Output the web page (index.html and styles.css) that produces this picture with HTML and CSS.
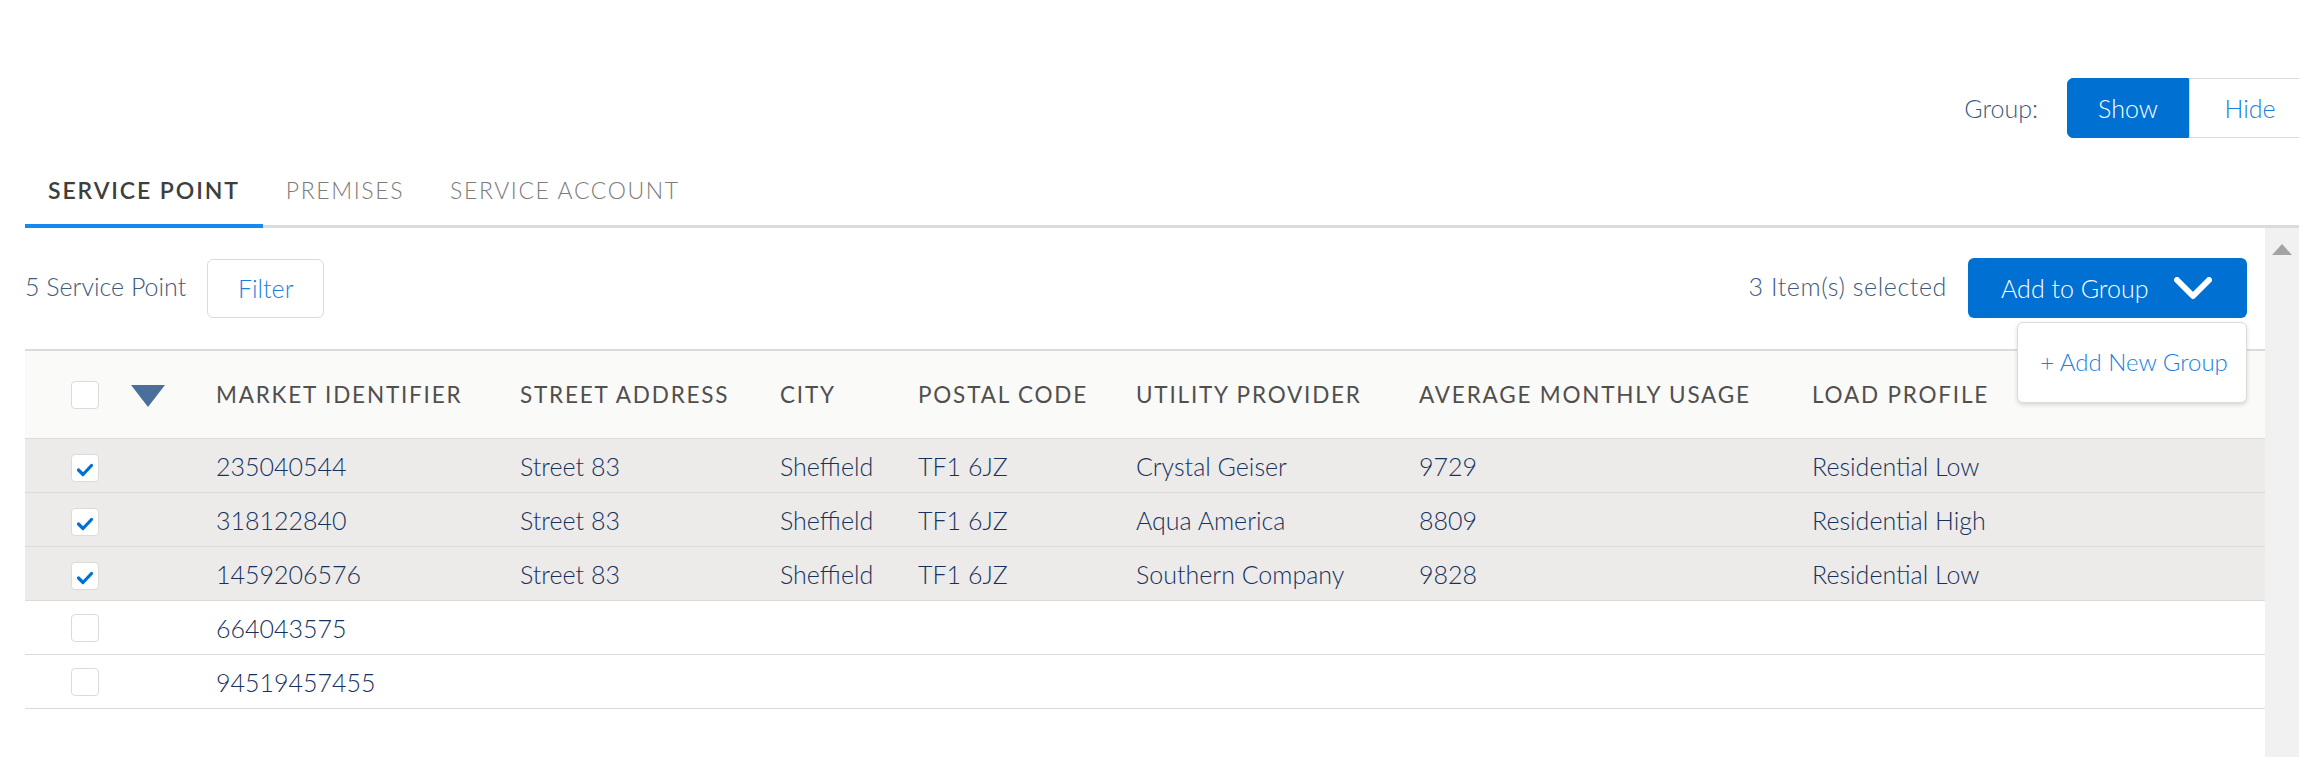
FILE: index.html
```html
<!DOCTYPE html>
<html>
<head>
<meta charset="utf-8">
<link rel="stylesheet" href="styles.css">
</head>
<body>
<div class="page">
  <div class="topbar">
    <span class="group-label">Group:</span>
    <div class="toggle">
      <button class="toggle-btn on">Show</button>
      <button class="toggle-btn">Hide</button>
    </div>
  </div>

  <div class="tabs">
    <div class="tab active">SERVICE POINT</div>
    <div class="tab">PREMISES</div>
    <div class="tab">SERVICE ACCOUNT</div>
  </div>

  <div class="panel">
    <div class="content">
      <div class="toolbar">
        <div class="toolbar-left">
          <span class="count">5 Service Point</span>
          <button class="btn-outline">Filter</button>
        </div>
        <div class="toolbar-right">
          <span class="count">3 Item(s) selected</span>
          <div class="menu-wrap">
            <button class="btn-brand">Add to Group
              <svg class="chev" width="38" height="24" viewBox="0 0 38 24"><path d="M3 3 L19 19 L35 3" fill="none" stroke="#fff" stroke-width="6" stroke-linecap="round" stroke-linejoin="round"/></svg>
            </button>
            <div class="menu">
              <span class="menu-item">+ Add New Group</span>
            </div>
          </div>
        </div>
      </div>

      <div class="table">
        <div class="row head">
          <div class="cell c-check"><span class="cb"></span></div>
          <div class="cell c-tri"><svg width="34" height="22" viewBox="0 0 34 22"><path d="M0 0 H34 L17 22 Z" fill="#4a6f9c"/></svg></div>
          <div class="cell">MARKET IDENTIFIER</div>
          <div class="cell">STREET ADDRESS</div>
          <div class="cell">CITY</div>
          <div class="cell">POSTAL CODE</div>
          <div class="cell">UTILITY PROVIDER</div>
          <div class="cell">AVERAGE MONTHLY USAGE</div>
          <div class="cell">LOAD PROFILE</div>
        </div>

        <div class="row sel">
          <div class="cell c-check"><span class="cb"><svg width="28" height="28" viewBox="0 0 28 28"><path d="M7.5 16 L12 20.5 L20.5 11.5" fill="none" stroke="#0070d2" stroke-width="3.2" stroke-linecap="round" stroke-linejoin="round"/></svg></span></div>
          <div class="cell c-tri"></div>
          <div class="cell">235040544</div>
          <div class="cell">Street 83</div>
          <div class="cell">Sheffield</div>
          <div class="cell">TF1 6JZ</div>
          <div class="cell">Crystal Geiser</div>
          <div class="cell">9729</div>
          <div class="cell">Residential Low</div>
        </div>

        <div class="row sel">
          <div class="cell c-check"><span class="cb"><svg width="28" height="28" viewBox="0 0 28 28"><path d="M7.5 16 L12 20.5 L20.5 11.5" fill="none" stroke="#0070d2" stroke-width="3.2" stroke-linecap="round" stroke-linejoin="round"/></svg></span></div>
          <div class="cell c-tri"></div>
          <div class="cell">318122840</div>
          <div class="cell">Street 83</div>
          <div class="cell">Sheffield</div>
          <div class="cell">TF1 6JZ</div>
          <div class="cell">Aqua America</div>
          <div class="cell">8809</div>
          <div class="cell">Residential High</div>
        </div>

        <div class="row sel">
          <div class="cell c-check"><span class="cb"><svg width="28" height="28" viewBox="0 0 28 28"><path d="M7.5 16 L12 20.5 L20.5 11.5" fill="none" stroke="#0070d2" stroke-width="3.2" stroke-linecap="round" stroke-linejoin="round"/></svg></span></div>
          <div class="cell c-tri"></div>
          <div class="cell">1459206576</div>
          <div class="cell">Street 83</div>
          <div class="cell">Sheffield</div>
          <div class="cell">TF1 6JZ</div>
          <div class="cell">Southern Company</div>
          <div class="cell">9828</div>
          <div class="cell">Residential Low</div>
        </div>

        <div class="row">
          <div class="cell c-check"><span class="cb"></span></div>
          <div class="cell c-tri"></div>
          <div class="cell">664043575</div>
          <div class="cell"></div>
          <div class="cell"></div>
          <div class="cell"></div>
          <div class="cell"></div>
          <div class="cell"></div>
          <div class="cell"></div>
        </div>

        <div class="row">
          <div class="cell c-check"><span class="cb"></span></div>
          <div class="cell c-tri"></div>
          <div class="cell">94519457455</div>
          <div class="cell"></div>
          <div class="cell"></div>
          <div class="cell"></div>
          <div class="cell"></div>
          <div class="cell"></div>
          <div class="cell"></div>
        </div>
      </div>
    </div>
    <div class="scrollbar">
      <svg class="sb-arrow" width="20" height="11" viewBox="0 0 20 11"><path d="M0 11 L10 0 L20 11 Z" fill="#a3a3a3"/></svg>
    </div>
  </div>
</div>
</body>
</html>
```

FILE: styles.css
```css
* { box-sizing: border-box; }

html, body {
  margin: 0;
  padding: 0;
  background: #ffffff;
  overflow: hidden;
}

body {
  font-family: Lato, "Noto Sans", sans-serif;
  font-weight: 300;
  color: #16325c;
  width: 2299px;
  height: 757px;
}

.page {
  padding-left: 25px;
  height: 757px;
  display: flex;
  flex-direction: column;
}

button {
  font-family: inherit;
  font-weight: inherit;
  cursor: pointer;
}

/* top bar */
.topbar {
  display: flex;
  justify-content: flex-end;
  align-items: center;
  gap: 29px;
  padding-top: 78px;
  margin-right: -12px;
}

.group-label {
  font-size: 25px;
  color: #3e5a80;
}

.toggle {
  display: flex;
  height: 60px;
}

.toggle-btn {
  width: 122px;
  height: 60px;
  border: 1px solid #dddbda;
  background: #fff;
  color: #1b7fe0;
  font-size: 25px;
  padding: 0;
}

.toggle-btn.on {
  background: #0070d2;
  border-color: #0070d2;
  color: #fff;
  border-radius: 6px 0 0 6px;
}

/* tabs */
.tabs {
  display: flex;
  padding-top: 37px;
  box-shadow: inset 0 -3px 0 #dddbda;
}

.tab {
  padding: 0 23px 19px;
  border-bottom: 4px solid transparent;
  font-size: 23px;
  line-height: 30px;
  letter-spacing: 1.6px;
  color: #7d7b78;
}

.tab.active {
  border-bottom-color: #1589ee;
  color: #3e3e3c;
  font-weight: 600;
  letter-spacing: 1.9px;
}

/* panel */
.panel {
  flex: 1;
  display: flex;
  min-height: 0;
}

.content {
  flex: 1;
  min-width: 0;
}

.scrollbar {
  width: 34px;
  background: #f1f1f1;
  display: flex;
  justify-content: center;
  padding-top: 16px;
}

.sb-arrow { display: block; }

.toolbar {
  display: flex;
  justify-content: space-between;
  align-items: center;
  margin-top: 30px;
  height: 60px;
  padding-right: 18px;
}

.toolbar-left, .toolbar-right {
  display: flex;
  align-items: center;
}

.toolbar-left { gap: 21px; }
.toolbar-right { gap: 21px; }

.count {
  font-size: 25px;
  color: #3e5a80;
  margin-top: -4px;
}

.toolbar-right .count {
  letter-spacing: 0.6px;
}

.btn-outline {
  width: 117px;
  height: 59px;
  border: 1px solid #dddbda;
  border-radius: 6px;
  background: #fff;
  color: #1b7fe0;
  font-size: 25px;
  padding: 0;
}

.menu-wrap { position: relative; }

.btn-brand {
  display: flex;
  align-items: center;
  gap: 26px;
  width: 279px;
  height: 60px;
  padding: 0 0 0 33px;
  border: none;
  border-radius: 6px;
  background: #0070d2;
  color: #fff;
  font-size: 25px;
}

.chev { display: block; margin-top: 2px; }

.menu {
  position: absolute;
  right: 0;
  top: 64px;
  width: 230px;
  height: 81px;
  background: #fff;
  border: 1px solid #dddbda;
  border-radius: 6px;
  box-shadow: 0 2px 4px rgba(0, 0, 0, 0.14);
  display: flex;
  align-items: center;
  justify-content: center;
  z-index: 5;
}

.menu-item {
  font-size: 24px;
  color: #1b7fe0;
  padding-left: 4px;
  margin-top: -3px;
}

/* table */
.table {
  margin-top: 31px;
  border-top: 2px solid #dddbda;
}

.row {
  display: grid;
  grid-template-columns: 106px 85px 304px 260px 138px 218px 283px 393px 1fr;
  height: 54px;
  border-bottom: 1px solid #dddbda;
  align-items: center;
  font-size: 25px;
  color: #16325c;
}

.row.head {
  height: 88px;
  background: #fafaf9;
  font-size: 22.5px;
  letter-spacing: 1.8px;
  color: #514f4d;
  font-weight: 400;
}

.row.sel { background: #ecebea; }

.cell {
  white-space: nowrap;
  overflow: visible;
}

.c-check { padding-left: 46px; display: flex; align-items: center; }
.c-tri { display: flex; align-items: center; padding-top: 2px; }
.c-tri svg { display: block; }

.cb {
  display: block;
  width: 28px;
  height: 28px;
  border: 1px solid #dddbda;
  border-radius: 4px;
  background: #fff;
  position: relative;
}

.cb svg {
  position: absolute;
  left: -1px;
  top: -1px;
}

.row.sel .c-check { padding-top: 4px; }
```
